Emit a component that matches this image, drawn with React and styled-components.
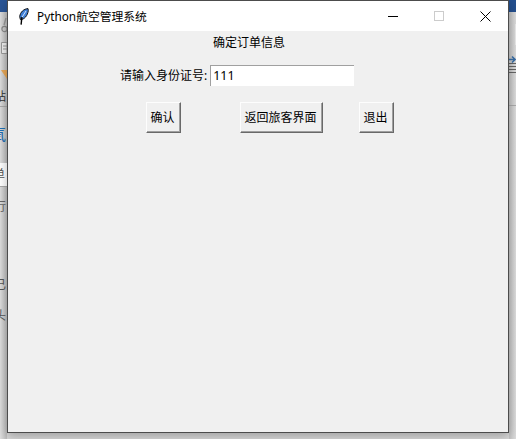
import React from "react";
import styled, { createGlobalStyle } from "styled-components";

const GlobalStyle = createGlobalStyle`
  html, body {
    margin: 0;
    padding: 0;
    background: #d9d9d9;
  }
  body {
    font-family: "Noto Sans", "Noto Sans CJK SC", sans-serif;
    font-size: 12px;
    color: #000;
  }
`;

const Desktop = styled.div`
  width: 516px;
  height: 439px;
  display: flex;
  overflow: hidden;
  background: #d9d9d9;
`;

const LeftStrip = styled.div`
  width: 7px;
  height: 439px;
  flex: none;
  overflow: hidden;
  display: flex;
  flex-direction: column;
  background: linear-gradient(90deg, #dedede, #bdbdbd);
`;

const StripRow = styled.div`
  height: ${(p) => p.$h}px;
  flex: none;
  width: 40px;
  margin-left: ${(p) => p.$shift || 0}px;
  font-size: ${(p) => p.$size || 12}px;
  line-height: ${(p) => p.$line || p.$h}px;
  white-space: nowrap;
  color: ${(p) => p.$color || "#333"};
  background: ${(p) => p.$bg || "transparent"};
  border-bottom: ${(p) => (p.$rule ? "1px solid #a9a9a9" : "none")};
  box-sizing: border-box;
`;

const RightStrip = styled.div`
  flex: 1;
  height: 439px;
  display: flex;
  flex-direction: column;
  background: linear-gradient(90deg, #c4c4c4, #dcdcdc);
`;

const RightTop = styled.div`
  height: 12px;
  background: #234f8f;
`;

const RightBody = styled.div`
  height: 94px;
  padding-top: 3px;
  box-sizing: border-box;
  border-bottom: 1px solid #ababab;
`;

const Window = styled.div`
  width: 502px;
  height: 433px;
  flex: none;
  box-sizing: border-box;
  border: 1px solid #4c4c4c;
  background: #f0f0f0;
  display: flex;
  flex-direction: column;
  box-shadow: 0 3px 10px rgba(0, 0, 0, 0.28);
  position: relative;
`;

const TitleBar = styled.div`
  height: 30px;
  flex: none;
  background: #fff;
  display: flex;
  align-items: center;
  padding-left: 11px;
`;

const TitleText = styled.span`
  margin-left: 8px;
  font-size: 11.8px;
  line-height: 30px;
`;

const WindowControls = styled.div`
  margin-left: auto;
  display: flex;
  height: 30px;
`;

const ControlButton = styled.div`
  width: 46px;
  height: 30px;
  display: flex;
  align-items: center;
  justify-content: center;
`;

const Content = styled.div`
  flex: 1;
  display: flex;
  flex-direction: column;
`;

const Heading = styled.div`
  height: 24px;
  line-height: 23px;
  text-align: center;
  font-size: 12px;
  padding-right: 18px;
`;

const FormRow = styled.div`
  margin-top: 10px;
  height: 21px;
  display: flex;
  align-items: center;
  padding-left: 112px;
`;

const FieldLabel = styled.span`
  font-size: 12px;
  line-height: 21px;
  margin-right: 3px;
`;

const Entry = styled.div`
  width: 144px;
  height: 21px;
  box-sizing: border-box;
  background: #fff;
  border-top: 1px solid #a0a0a0;
  border-left: 1px solid #a0a0a0;
  padding-left: 2px;
  font-size: 12.5px;
  line-height: 19px;
`;

const ButtonRow = styled.div`
  margin-top: 16px;
  display: flex;
  padding-left: 138px;
`;

const TkButton = styled.div`
  width: ${(p) => p.$w}px;
  height: 31px;
  margin-right: ${(p) => p.$after || 0}px;
  box-sizing: border-box;
  padding: 0 2px 2px 0;
  background: #f0f0f0;
  border: 1px solid;
  border-color: #fdfdfd #696969 #696969 #fdfdfd;
  box-shadow: inset -1px -1px 0 #a0a0a0;
  display: flex;
  align-items: center;
  justify-content: center;
  font-size: 12px;
`;

function Feather() {
  return (
    <svg width="10" height="17" viewBox="0 0 10 17">
      <path d="M9 0.6 C5 0.8 1.2 4 0.7 8.6 L1.4 11.6 C5.4 11.6 8.6 7.6 9.3 2.6 Z" fill="#3f7fd6" stroke="#111" strokeWidth="1" />
      <path d="M7 3 L2.6 10" stroke="#cfe3fb" strokeWidth="1" fill="none" />
      <path d="M2.9 9 L2.1 16.6" stroke="#000" strokeWidth="1.4" fill="none" />
    </svg>
  );
}

function MinimizeIcon() {
  return (
    <svg width="10" height="10" viewBox="0 0 10 10">
      <path d="M0 5.5H10" stroke="#000" strokeWidth="1" />
    </svg>
  );
}

function MaximizeIcon() {
  return (
    <svg width="10" height="10" viewBox="0 0 10 10">
      <rect x="0.5" y="0.5" width="9" height="9" fill="none" stroke="#ccc" strokeWidth="1" />
    </svg>
  );
}

function CloseIcon() {
  return (
    <svg width="11" height="11" viewBox="0 0 11 11">
      <path d="M0.5 0.5L10.5 10.5M10.5 0.5L0.5 10.5" stroke="#000" strokeWidth="1" />
    </svg>
  );
}

// clipped toolbar icons of the window behind
function BehindIcons() {
  return (
    <svg width="7" height="78" viewBox="0 0 7 78" style={{ display: "block" }}>
      <path d="M6 6L4 13" stroke="#999" strokeWidth="1.4" fill="none" />
      <circle cx="4.5" cy="17" r="2.6" stroke="#8a8a8a" strokeWidth="1.2" fill="none" />
      <path d="M1.5 30.5H7V41.5H1.5Z" stroke="#999" strokeWidth="1" fill="#eee" />
      <path d="M3 34H7M3 37H7" stroke="#999" strokeWidth="1" />
      <path d="M1 58H7V67Z" fill="#e8a857" />
    </svg>
  );
}

function LinesIcon() {
  return (
    <svg width="7" height="60" viewBox="0 0 7 60" style={{ display: "block" }}>
      <rect x="6" y="9" width="1" height="21" fill="#eaeaea" />
      <path d="M0 44.5H5M3 41.5L6 44.5L3 47.5" stroke="#3a6ea5" strokeWidth="1.6" fill="none" />
      <path d="M0 48.5H7M0 51.5H7M0 54.5H7M0 57.5H7" stroke="#666" strokeWidth="1" />
    </svg>
  );
}

export default function App() {
  return (
    <Desktop>
      <GlobalStyle />
      <LeftStrip>
        <StripRow $h={12} $bg="#2a5596" />
        <BehindIcons />
        <StripRow $h={17} $line={13} $shift={-6} $rule>贴</StripRow>
        <StripRow $h={19} />
        <StripRow $h={17} $shift={-10} $size={16} $color="#1f6fb5">氧</StripRow>
        <StripRow $h={20} />
        <StripRow $h={24} $shift={-7} $bg="#fff" $rule $color="#555">单</StripRow>
        <StripRow $h={13} />
        <StripRow $h={14} $shift={-6} $color="#666">行</StripRow>
        <StripRow $h={62} />
        <StripRow $h={18} $shift={-6} $color="#555">已</StripRow>
        <StripRow $h={13} />
        <StripRow $h={18} $shift={-6} $color="#555">头</StripRow>
      </LeftStrip>
      <Window>
        <TitleBar>
          <Feather />
          <TitleText>Python航空管理系统</TitleText>
          <WindowControls>
            <ControlButton><MinimizeIcon /></ControlButton>
            <ControlButton><MaximizeIcon /></ControlButton>
            <ControlButton><CloseIcon /></ControlButton>
          </WindowControls>
        </TitleBar>
        <Content>
          <Heading>确定订单信息</Heading>
          <FormRow>
            <FieldLabel>请输入身份证号:</FieldLabel>
            <Entry>111</Entry>
          </FormRow>
          <ButtonRow>
            <TkButton $w={35} $after={59}>确认</TkButton>
            <TkButton $w={83} $after={36}>返回旅客界面</TkButton>
            <TkButton $w={35}>退出</TkButton>
          </ButtonRow>
        </Content>
      </Window>
      <RightStrip>
        <RightTop />
        <RightBody><LinesIcon /></RightBody>
      </RightStrip>
    </Desktop>
  );
}
